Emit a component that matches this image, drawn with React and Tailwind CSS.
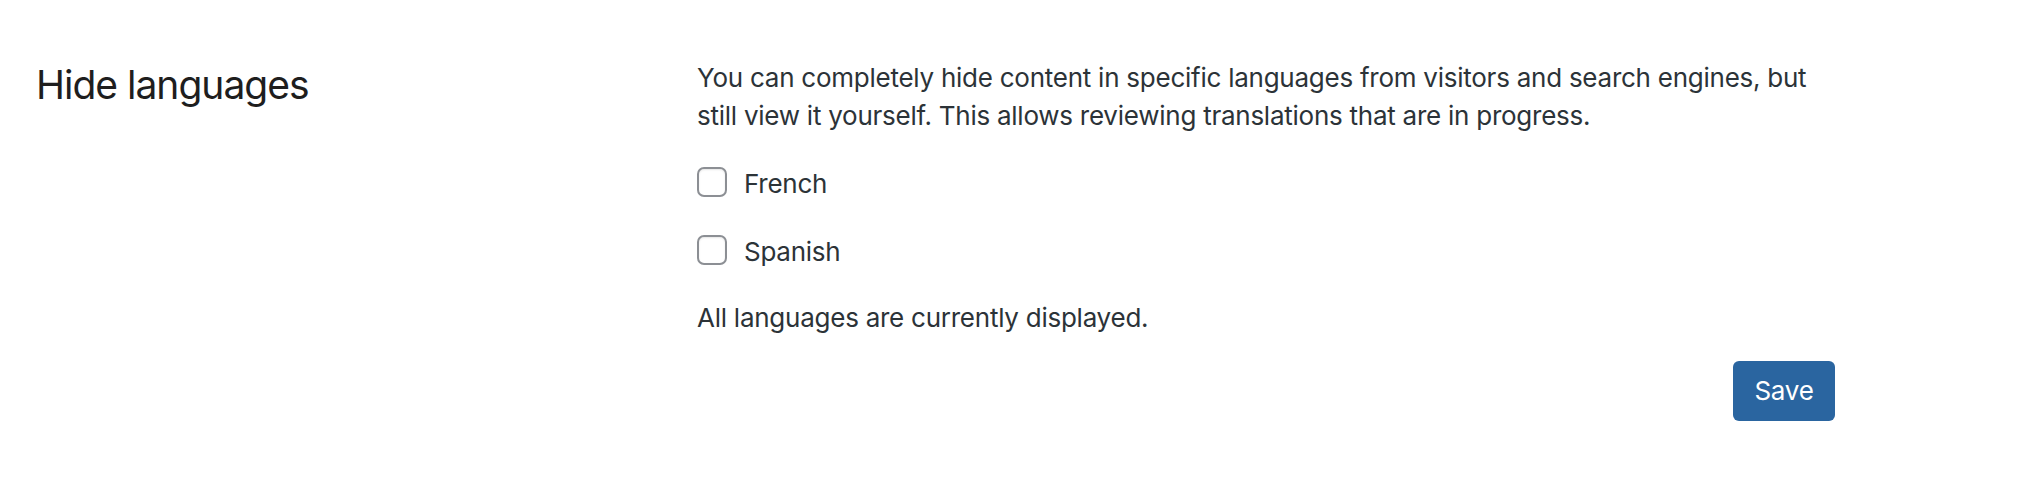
const languages = ["French", "Spanish"];

export default function App() {
  return (
    <div
      className="w-[2036px] h-[480px] bg-white text-[#2c3338]"
      style={{ fontFamily: 'Inter, "Liberation Sans", Arial, sans-serif' }}
    >
      <div className="flex pt-[59px] pl-[36px]">
        {/* Left column: section title */}
        <div className="w-[661px] shrink-0">
          <h2 className="mt-[2px] text-[39px] leading-[48px] tracking-[-1px] font-normal text-[#1e1e1e]">
            Hide languages
          </h2>
        </div>

        {/* Right column: settings */}
        <div className="w-[1138px] flex flex-col tracking-[-0.25px]">
          <p className="text-[26px] leading-[38px]">
            You can completely hide content in specific languages from visitors and search engines, but
            still view it yourself. This allows reviewing translations that are in progress.
          </p>

          <div className="mt-[32px] flex flex-col gap-[36px]">
            {languages.map((lang) => (
              <label key={lang} className="flex items-start gap-[17px] cursor-pointer">
                <input
                  type="checkbox"
                  className="appearance-none w-[30px] h-[30px] shrink-0 rounded-[7px] border-2 border-[#8c8f94] bg-white shadow-[inset_0_1px_2px_rgba(0,0,0,0.1)]"
                />
                <span className="mt-[2px] text-[26px] leading-[30px]">{lang}</span>
              </label>
            ))}
          </div>

          <p className="mt-[32px] text-[26px] leading-[38px]">All languages are currently displayed.</p>

          <div className="mt-[24px] flex justify-end">
            <button
              type="button"
              className="h-[60px] w-[102px] rounded-[6px] bg-[#2a65a0] text-white text-[26px] leading-none"
            >
              Save
            </button>
          </div>
        </div>
      </div>
    </div>
  );
}
